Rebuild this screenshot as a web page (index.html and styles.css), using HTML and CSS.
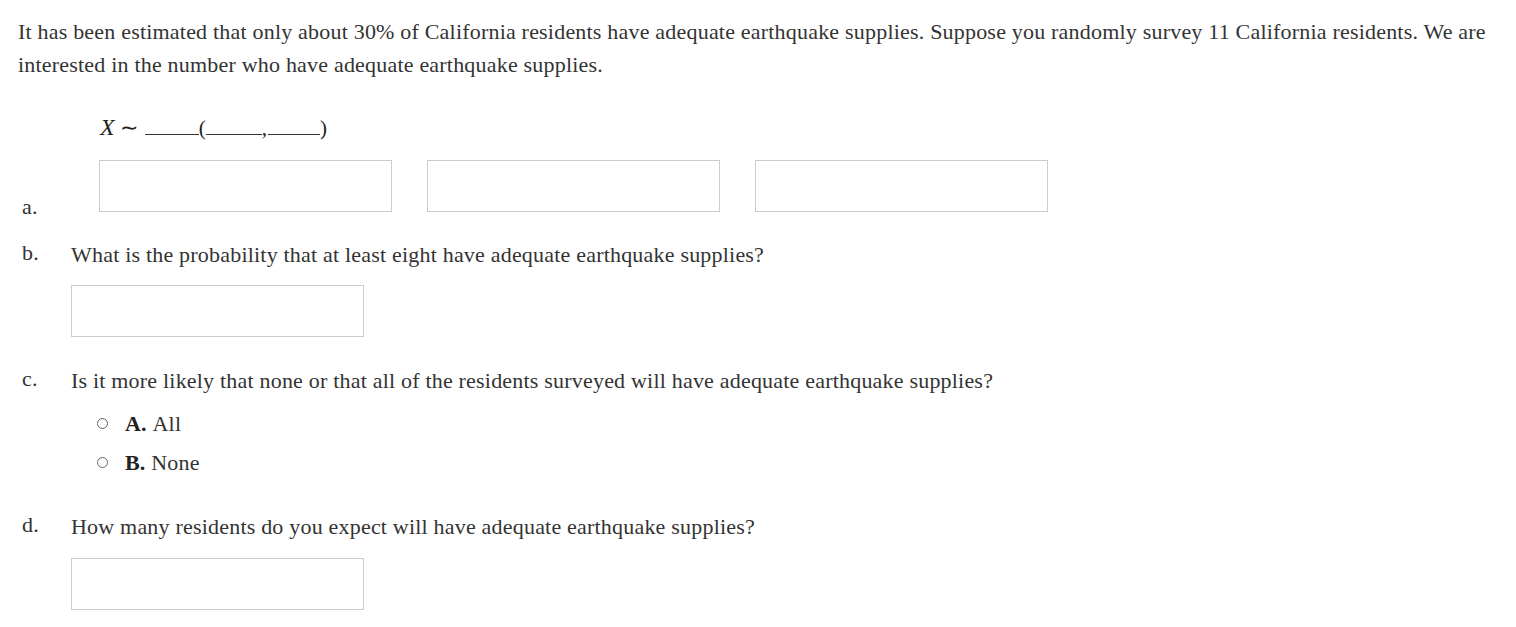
FILE: index.html
```html
<!DOCTYPE html>
<html>
<head>
<meta charset="utf-8">
<link rel="stylesheet" href="styles.css">
</head>
<body>
<div class="page">
  <p class="intro">It has been estimated that only about 30% of California residents have adequate earthquake supplies. Suppose you randomly survey 11 California residents. We are interested in the number who have adequate earthquake supplies.</p>

  <div class="dist"><span class="mx">X</span><span class="tilde">∼</span><span class="blank b1"></span><span class="paren">(</span><span class="blank b2"></span><span class="comma">,</span><span class="blank b3"></span><span class="paren">)</span></div>

  <div class="part part-a">
    <span class="label">a.</span>
    <div class="inputs">
      <div class="box"></div>
      <div class="box"></div>
      <div class="box"></div>
    </div>
  </div>

  <div class="part part-b">
    <span class="label">b.</span>
    <div class="content">
      <div class="q">What is the probability that at least eight have adequate earthquake supplies?</div>
      <div class="box"></div>
    </div>
  </div>

  <div class="part part-c">
    <span class="label">c.</span>
    <div class="content">
      <div class="q">Is it more likely that none or that all of the residents surveyed will have adequate earthquake supplies?</div>
      <div class="options">
        <div class="opt"><span class="radio"></span><b>A.</b>&nbsp;All</div>
        <div class="opt"><span class="radio"></span><b>B.</b>&nbsp;None</div>
      </div>
    </div>
  </div>

  <div class="part part-d">
    <span class="label">d.</span>
    <div class="content">
      <div class="q">How many residents do you expect will have adequate earthquake supplies?</div>
      <div class="box"></div>
    </div>
  </div>
</div>
</body>
</html>
```

FILE: styles.css
```css
html, body {
  margin: 0;
  padding: 0;
  background: #ffffff;
}
body {
  font-family: "Liberation Serif", "Times New Roman", serif;
  color: #333333;
  font-size: 22px;
  letter-spacing: 0.2px;
}
.page {
  padding: 15px 18px 0 18px;
}
.intro {
  margin: 0;
  line-height: 33px;
}
.dist {
  margin: 33px 0 0 82px;
  height: 30px;
  font-size: 21px;
  letter-spacing: 0;
  color: #222;
  display: flex;
  align-items: baseline;
}
.mx {
  font-style: italic;
  font-size: 24px;
}
.tilde {
  margin: 0 7px 0 5px;
  font-size: 22px;
}
.blank {
  display: inline-block;
  border-bottom: 1px solid #333;
  height: 16px;
}
.b1 { width: 54px; }
.b2 { width: 56px; }
.b3 { width: 52px; }
.comma { margin-right: 1px; }
.part {
  display: flex;
  align-items: flex-start;
}
.label {
  width: 53px;
  padding-left: 4px;
  box-sizing: border-box;
  flex: none;
}
.part-a {
  margin-top: 16px;
  align-items: flex-end;
}
.part-a .label {
  line-height: 10px;
}
.inputs {
  display: flex;
  gap: 35px;
  padding-left: 28px;
}
.box {
  width: 293px;
  height: 52px;
  box-sizing: border-box;
  border: 1px solid #cccccc;
  background: #fff;
}
.q {
  line-height: 30px;
}
.part-b { margin-top: 28px; }
.part-b .box { margin-top: 15px; }
.part-c { margin-top: 29px; }
.options {
  margin-top: 8px;
  padding-left: 26px;
}
.opt {
  display: flex;
  align-items: center;
  height: 39px;
}
.opt b { font-weight: bold; color: #222; }
.radio {
  width: 9px;
  height: 9px;
  border: 1px solid #666;
  border-radius: 50%;
  margin-right: 17px;
}
.part-d { margin-top: 30px; }
.part-d .box { margin-top: 16px; }
```
